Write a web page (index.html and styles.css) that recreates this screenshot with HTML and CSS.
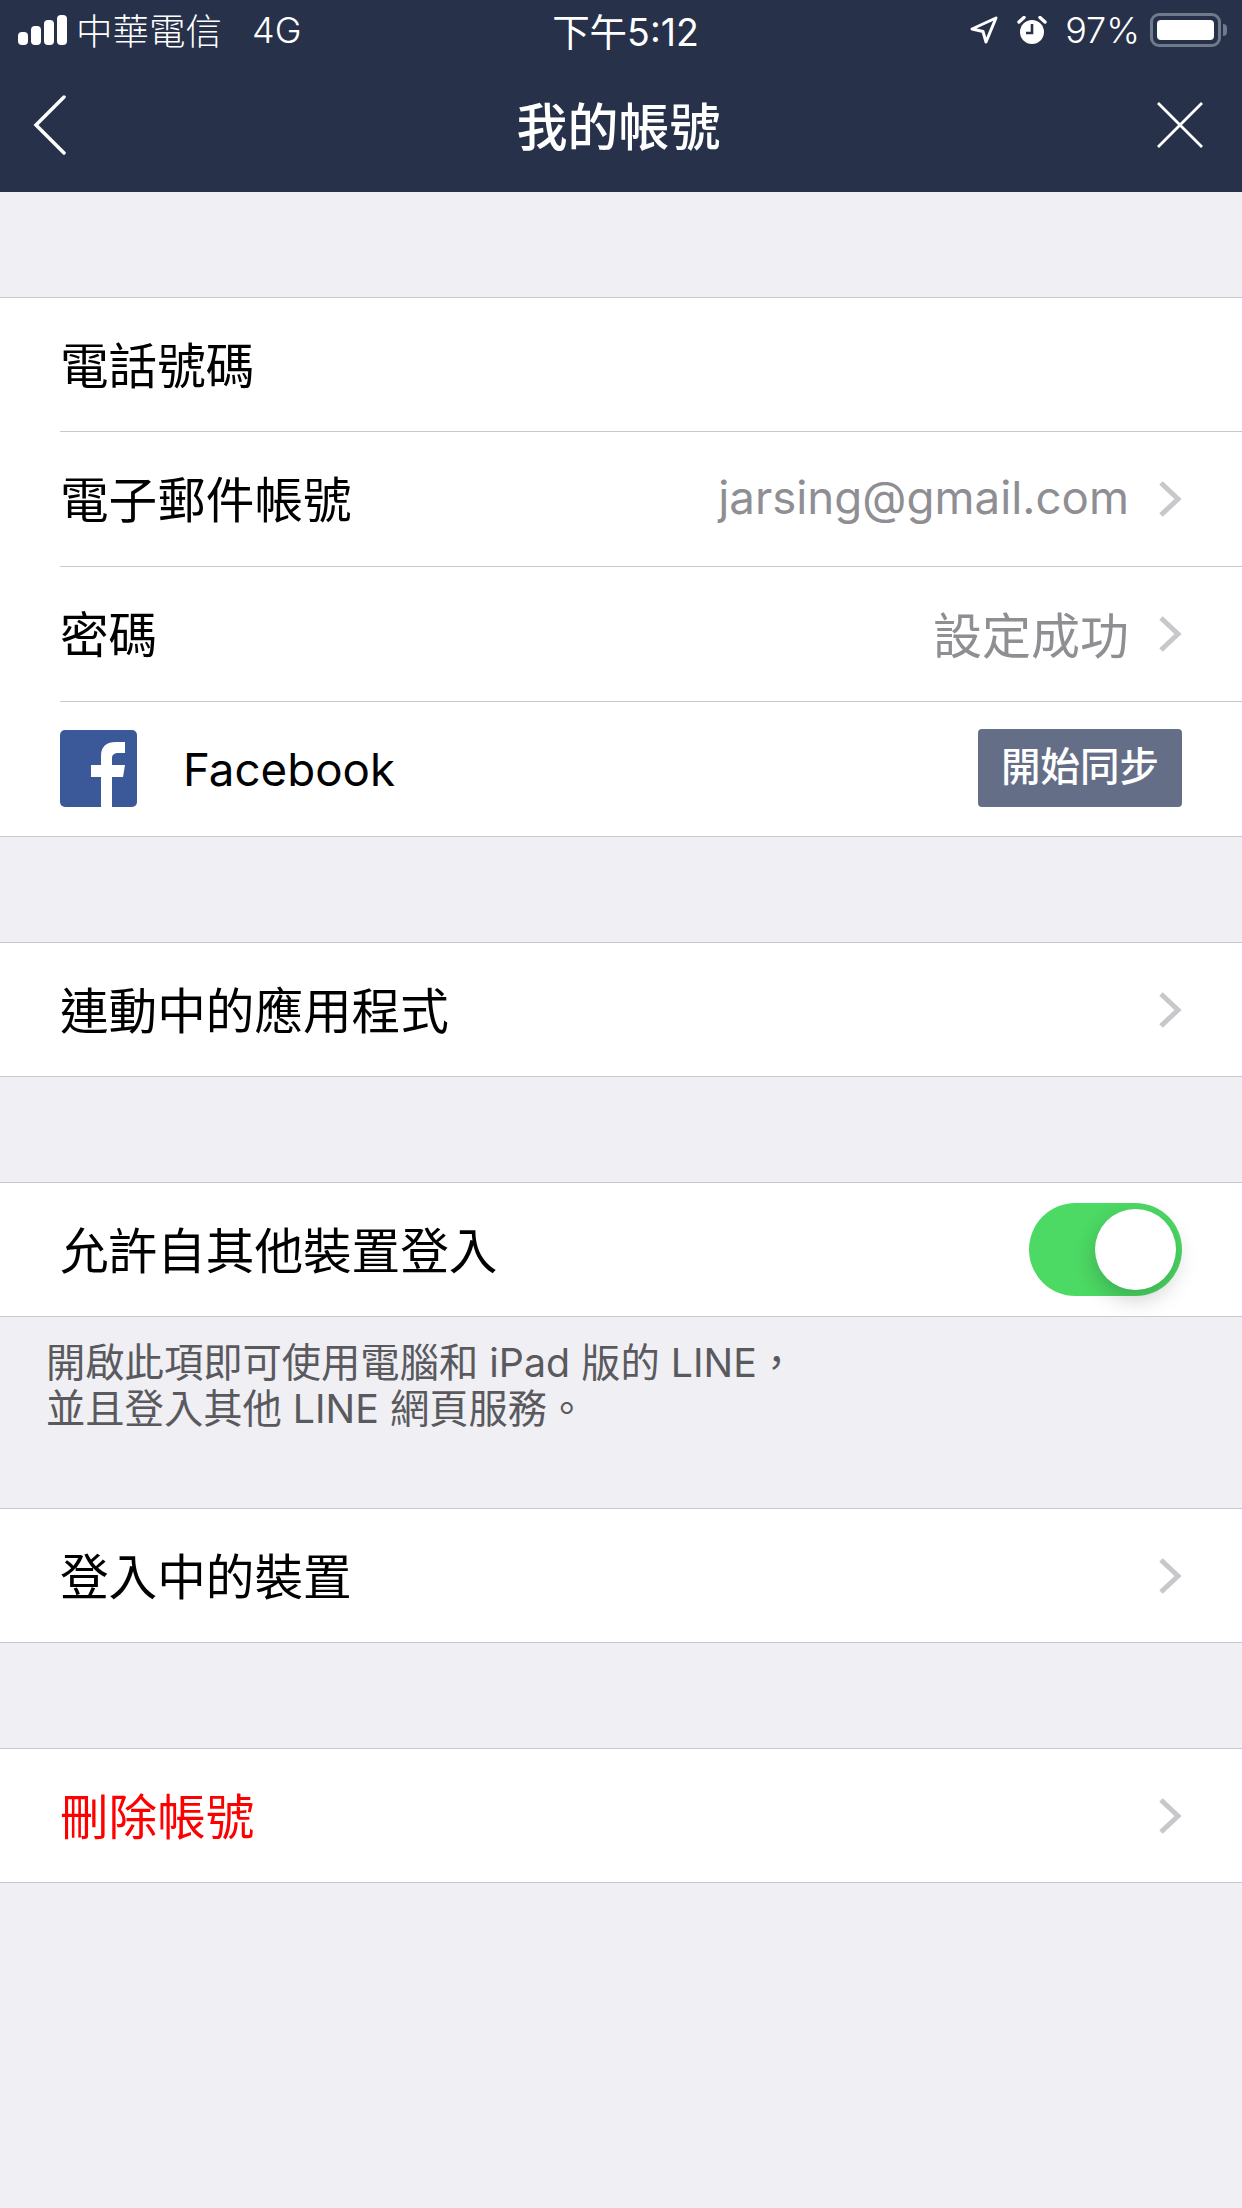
FILE: index.html
```html
<!DOCTYPE html>
<html>
<head lang="zh-Hant">
    <meta charset="UTF-8">
    <title>我的帳號</title>
    <link rel="stylesheet" href="styles.css">
</head>
<body>
<div id="header">
    <div id="status">
        <div class="status-side">
            <div class="signal"><i class="b1"></i><i class="b2"></i><i class="b3"></i><i class="b4"></i></div>
            <span class="carrier">中華電信</span>
            <span class="network">4G</span>
        </div>
        <div class="clock">下午5:12</div>
        <div class="status-side status-right">
            <svg class="ico-loc" width="28" height="28" viewBox="0 0 28 28"><path d="M26 2 2 13l11 2.5L16 26z" fill="none" stroke="#fff" stroke-width="3" stroke-linejoin="round"/></svg>
            <svg class="ico-alarm" width="30" height="28" viewBox="0 0 30 28">
                <circle cx="15" cy="16" r="12" fill="#fff"/>
                <path d="M15 8v9H9" fill="none" stroke="#273149" stroke-width="2.6"/>
                <path d="M2 6 7 1.500M28 6 23 1.500" fill="none" stroke="#fff" stroke-width="3.400" stroke-linecap="round"/>
            </svg>
            <span class="percent">97%</span>
            <div class="battery"><div class="battery-fill"></div></div>
            <div class="battery-nub"></div>
        </div>
    </div>
    <div id="nav">
        <svg class="nav-back" width="34" height="60" viewBox="0 0 34 60"><path d="M31 2 3 30l28 28" fill="none" stroke="#fff" stroke-width="3.500" stroke-linecap="round"/></svg>
        <h1>我的帳號</h1>
        <svg class="nav-close" width="48" height="48" viewBox="0 0 48 48"><path d="M2 2l44 44M46 2 2 46" fill="none" stroke="#fff" stroke-width="2.800"/></svg>
    </div>
</div>

<div class="group">
    <div class="row"><span class="label">電話號碼</span></div>
    <div class="row">
        <span class="label">電子郵件帳號</span>
        <span class="value value-mail">jarsing@gmail.com</span>
        <svg class="arrow" width="24" height="38" viewBox="0 0 24 38"><path d="M3 3l17 16L3 35" fill="none" stroke="#c7c7cc" stroke-width="5"/></svg>
    </div>
    <div class="row">
        <span class="label">密碼</span>
        <span class="value">設定成功</span>
        <svg class="arrow" width="24" height="38" viewBox="0 0 24 38"><path d="M3 3l17 16L3 35" fill="none" stroke="#c7c7cc" stroke-width="5"/></svg>
    </div>
    <div class="row">
        <svg class="fb" width="77" height="77" viewBox="0 0 77 77">
            <rect width="77" height="77" rx="5" fill="#3b5998"/>
            <path d="M41 77V47H31V35h10v-9c0-10 6-14 15-14h9v11h-6c-5 0-7 2-7 5v7h13l-2 12H52v30z" fill="#fff"/>
        </svg>
        <span class="label fb-label">Facebook</span>
        <div class="sync-btn">開始同步</div>
    </div>
</div>

<div class="group">
    <div class="row">
        <span class="label">連動中的應用程式</span>
        <svg class="arrow" width="24" height="38" viewBox="0 0 24 38"><path d="M3 3l17 16L3 35" fill="none" stroke="#c7c7cc" stroke-width="5"/></svg>
    </div>
</div>

<div class="group">
    <div class="row">
        <span class="label">允許自其他裝置登入</span>
        <div class="switch"><div class="knob"></div></div>
    </div>
</div>
<div class="note">開啟此項即可使用電腦和 iPad 版的 LINE，<br>並且登入其他 LINE 網頁服務。</div>

<div class="group group-after-note">
    <div class="row">
        <span class="label">登入中的裝置</span>
        <svg class="arrow" width="24" height="38" viewBox="0 0 24 38"><path d="M3 3l17 16L3 35" fill="none" stroke="#c7c7cc" stroke-width="5"/></svg>
    </div>
</div>

<div class="group">
    <div class="row">
        <span class="label danger">刪除帳號</span>
        <svg class="arrow" width="24" height="38" viewBox="0 0 24 38"><path d="M3 3l17 16L3 35" fill="none" stroke="#c7c7cc" stroke-width="5"/></svg>
    </div>
</div>
</body>
</html>
```

FILE: styles.css
```css
*{
    margin: 0;
    padding: 0;
    box-sizing: border-box;
}
html,body{
    height: 100%;
}
body{
    background: #efeff4;
    font-family: Inter, "Noto Sans CJK TC", sans-serif;
    color: #000;
}
#header{
    height: 192px;
    background: #273149;
    color: #fff;
}
#status{
    height: 62px;
    padding: 0 15px 3px 18px;
    display: grid;
    grid-template-columns: 1fr auto 1fr;
    align-items: center;
}
.status-side{
    display: flex;
    align-items: center;
}
.status-right{
    justify-content: flex-end;
}
.signal{
    display: flex;
    align-items: flex-end;
    gap: 3px;
    height: 30px;
}
.signal i{
    display: block;
    width: 10px;
    border-radius: 4px;
    background: #fff;
}
.signal .b1{ height: 13px; }
.signal .b2{ height: 19px; }
.signal .b3{ height: 25px; }
.signal .b4{ height: 30px; }
.carrier{
    margin-left: 9px;
    font-size: 36.500px;
    font-weight: 300;
}
.network{
    margin-left: 30px;
    font-size: 36px;
    font-weight: 300;
}
.clock{
    font-size: 37.500px;
    margin-left: 6px;
}
.ico-alarm{
    margin-left: 19px;
}
.percent{
    margin-left: 18px;
    font-size: 36px;
    font-weight: 300;
}
.battery{
    margin-left: 10px;
    width: 71px;
    height: 34px;
    padding: 4px;
    border: 3px solid #6f7a8c;
    border-radius: 9px;
}
.battery-fill{
    height: 100%;
    border-radius: 4px;
    background: #fff;
}
.battery-nub{
    width: 4px;
    height: 12px;
    margin-left: 2px;
    border-radius: 0 4px 4px 0;
    background: #6f7a8c;
}
#nav{
    height: 130px;
    padding: 0 38px 4px 33px;
    display: grid;
    grid-template-columns: 1fr auto 1fr;
    align-items: center;
}
#nav h1{
    font-size: 51px;
    font-weight: 500;
    margin-bottom: 2px;
}
.nav-close{
    justify-self: end;
}
.group{
    margin-top: 105px;
    background: #fff;
    border-top: 1px solid #c8c7cc;
    border-bottom: 1px solid #c8c7cc;
}
.group-after-note{
    margin-top: 0;
}
.row{
    height: 133px;
    margin-left: 60px;
    padding-right: 60px;
    display: flex;
    align-items: center;
}
.row + .row{
    height: 135px;
    border-top: 1px solid #c8c7cc;
}
.label{
    font-size: 48.600px;
    flex: 1;
    margin-bottom: 4px;
}
.danger{
    color: #fe0000;
}
.value{
    font-size: 49px;
    color: #8e8e93;
    margin-bottom: 3px;
}
.value-mail{
    font-size: 45.700px;
}
.arrow{
    margin-left: 29px;
}
.fb{
    margin: 0 46px 2px 0;
}
.fb-label{
    font-size: 45.700px;
    margin-bottom: 0;
}
.sync-btn{
    width: 204px;
    height: 78px;
    margin-bottom: 2px;
    line-height: 76px;
    text-align: center;
    font-size: 39.500px;
    font-weight: 500;
    color: #fff;
    background: #646f87;
    border-radius: 4px;
}
.switch{
    width: 153px;
    height: 93px;
    padding: 6px;
    display: flex;
    justify-content: flex-end;
    border-radius: 47px;
    background: #4cd964;
}
.knob{
    width: 81px;
    height: 81px;
    border-radius: 50%;
    background: #fff;
    box-shadow: 0 9px 22px rgba(0,0,0,.2);
}
.note{
    height: 191px;
    padding: 23px 46px 0;
    font-size: 39.300px;
    line-height: 46px;
    color: #59595e;
}
```
